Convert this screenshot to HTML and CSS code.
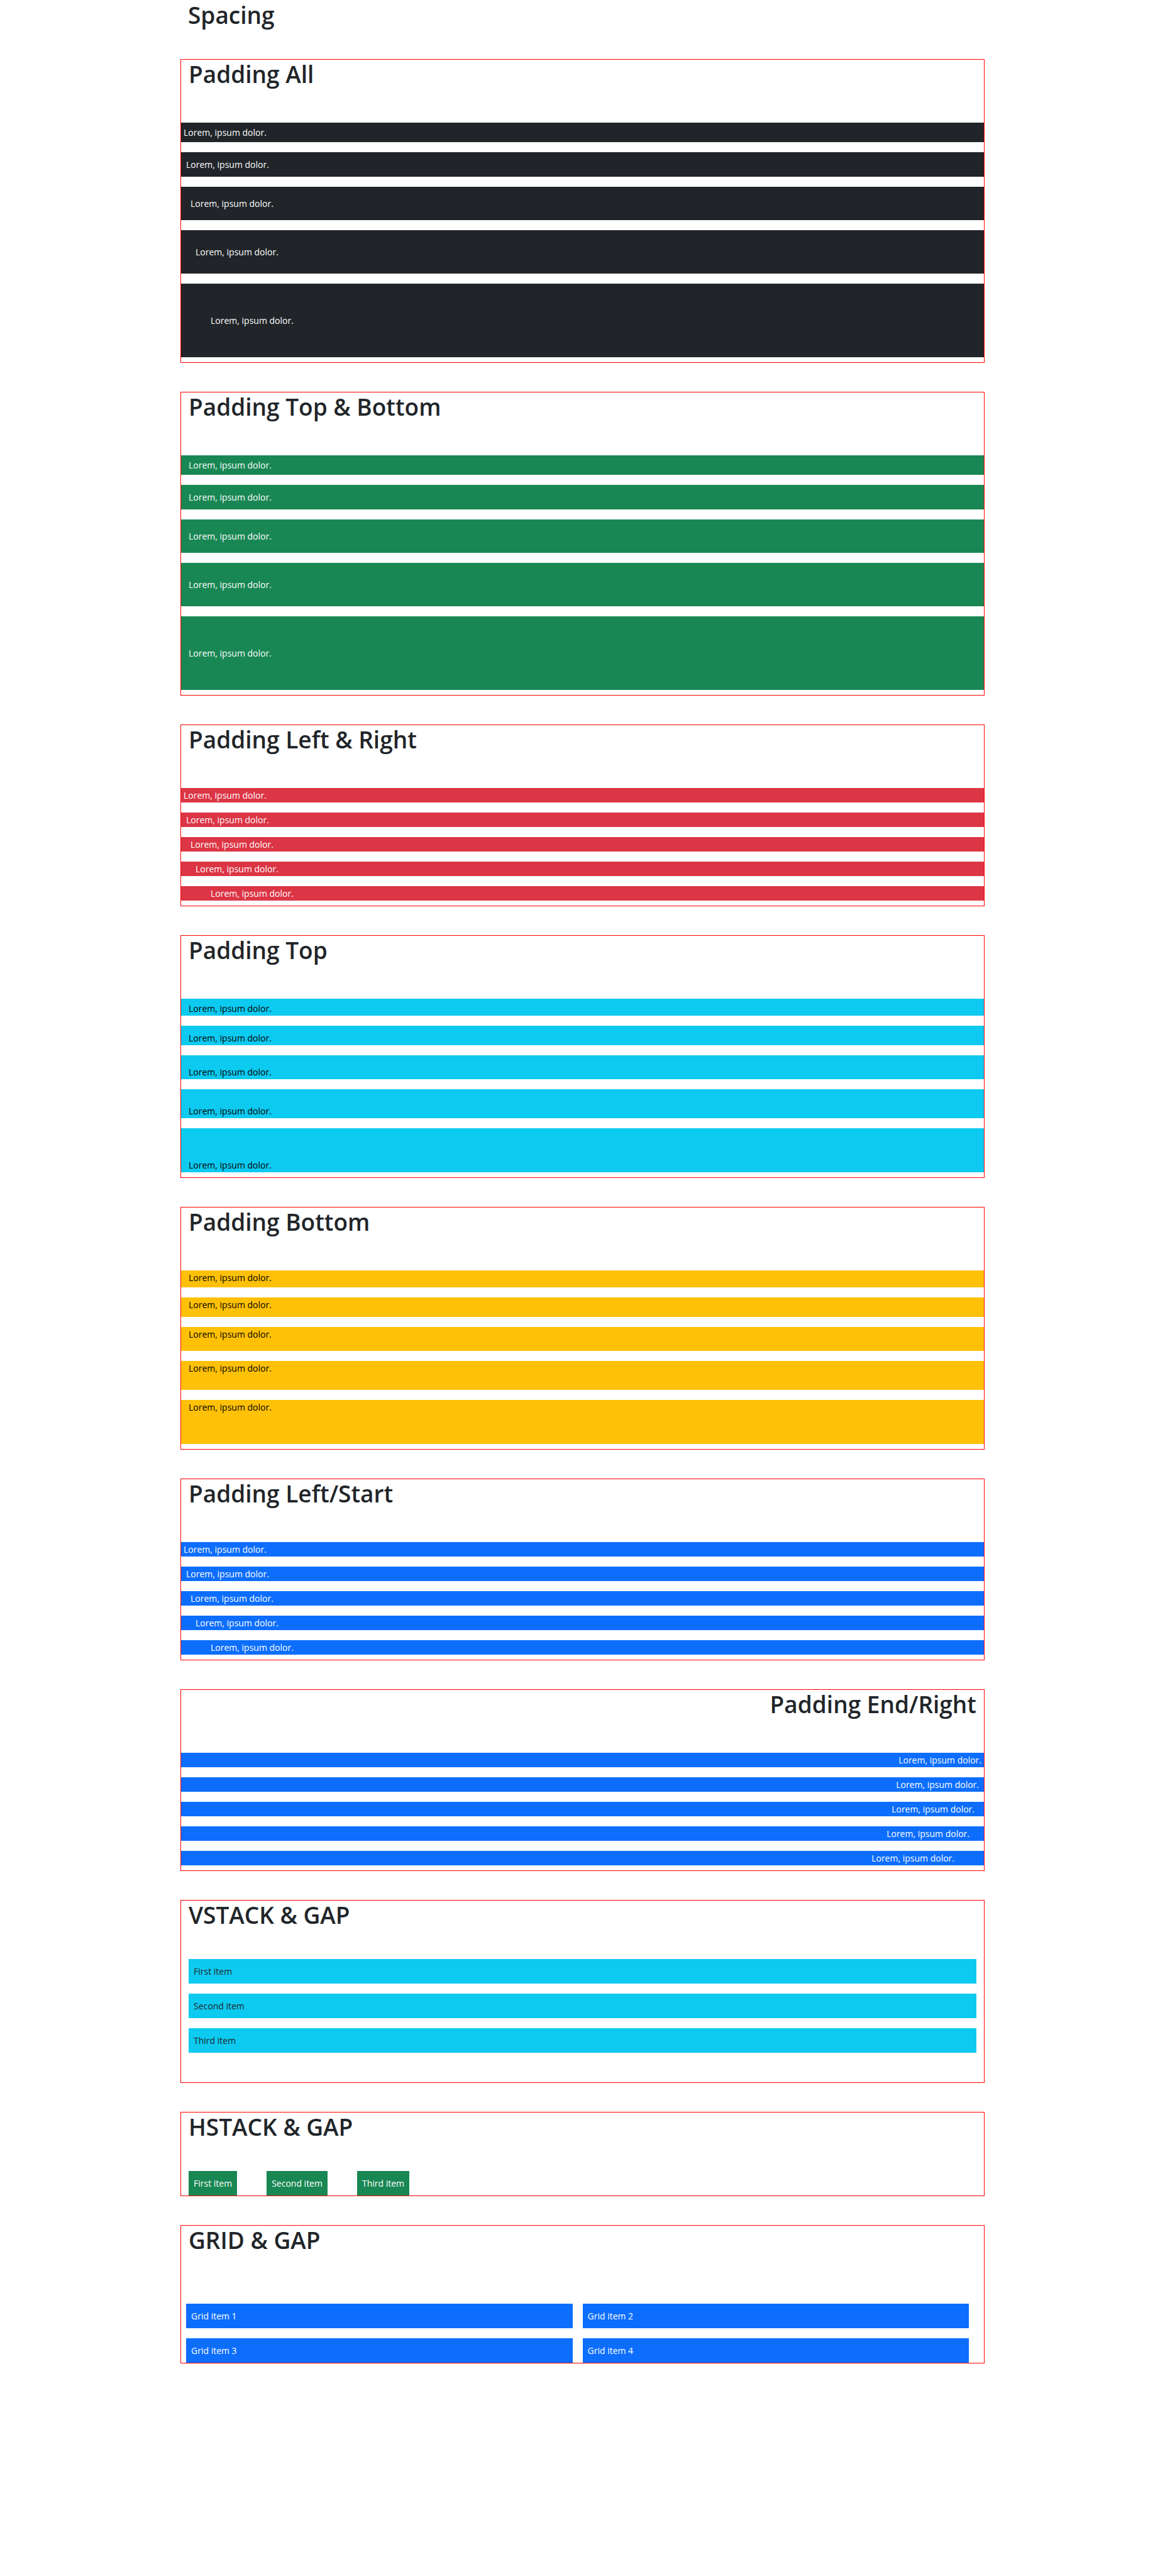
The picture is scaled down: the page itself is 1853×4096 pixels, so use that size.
FILE: index.html
```html
<!DOCTYPE html>
<html lang="en">
<head>
<meta charset="utf-8">
<meta name="viewport" content="width=device-width, initial-scale=1">
<title>Spacing</title>
<link rel="stylesheet" href="styles.css">
</head>
<body>
<main class="container">
  <h1 class="title page-title">Spacing</h1>

  <section class="box">
    <h1 class="title">Padding All</h1>
    <div class="bars dark">
      <div class="bar p-1">Lorem, ipsum dolor.</div>
      <div class="bar p-2">Lorem, ipsum dolor.</div>
      <div class="bar p-3">Lorem, ipsum dolor.</div>
      <div class="bar p-4">Lorem, ipsum dolor.</div>
      <div class="bar p-5">Lorem, ipsum dolor.</div>
    </div>
  </section>

  <section class="box">
    <h1 class="title">Padding Top &amp; Bottom</h1>
    <div class="bars success">
      <div class="bar py-1">Lorem, ipsum dolor.</div>
      <div class="bar py-2">Lorem, ipsum dolor.</div>
      <div class="bar py-3">Lorem, ipsum dolor.</div>
      <div class="bar py-4">Lorem, ipsum dolor.</div>
      <div class="bar py-5">Lorem, ipsum dolor.</div>
    </div>
  </section>

  <section class="box">
    <h1 class="title">Padding Left &amp; Right</h1>
    <div class="bars danger">
      <div class="bar px-1">Lorem, ipsum dolor.</div>
      <div class="bar px-2">Lorem, ipsum dolor.</div>
      <div class="bar px-3">Lorem, ipsum dolor.</div>
      <div class="bar px-4">Lorem, ipsum dolor.</div>
      <div class="bar px-5">Lorem, ipsum dolor.</div>
    </div>
  </section>

  <section class="box">
    <h1 class="title">Padding Top</h1>
    <div class="bars info">
      <div class="bar pt-1">Lorem, ipsum dolor.</div>
      <div class="bar pt-2">Lorem, ipsum dolor.</div>
      <div class="bar pt-3">Lorem, ipsum dolor.</div>
      <div class="bar pt-4">Lorem, ipsum dolor.</div>
      <div class="bar pt-5">Lorem, ipsum dolor.</div>
    </div>
  </section>

  <section class="box">
    <h1 class="title">Padding Bottom</h1>
    <div class="bars warning">
      <div class="bar pb-1">Lorem, ipsum dolor.</div>
      <div class="bar pb-2">Lorem, ipsum dolor.</div>
      <div class="bar pb-3">Lorem, ipsum dolor.</div>
      <div class="bar pb-4">Lorem, ipsum dolor.</div>
      <div class="bar pb-5">Lorem, ipsum dolor.</div>
    </div>
  </section>

  <section class="box">
    <h1 class="title">Padding Left/Start</h1>
    <div class="bars primary">
      <div class="bar ps-1">Lorem, ipsum dolor.</div>
      <div class="bar ps-2">Lorem, ipsum dolor.</div>
      <div class="bar ps-3">Lorem, ipsum dolor.</div>
      <div class="bar ps-4">Lorem, ipsum dolor.</div>
      <div class="bar ps-5">Lorem, ipsum dolor.</div>
    </div>
  </section>

  <section class="box text-end">
    <h1 class="title">Padding End/Right</h1>
    <div class="bars primary">
      <div class="bar pe-1">Lorem, ipsum dolor.</div>
      <div class="bar pe-2">Lorem, ipsum dolor.</div>
      <div class="bar pe-3">Lorem, ipsum dolor.</div>
      <div class="bar pe-4">Lorem, ipsum dolor.</div>
      <div class="bar pe-5">Lorem, ipsum dolor.</div>
    </div>
  </section>

  <section class="box">
    <h1 class="title">VSTACK &amp; GAP</h1>
    <div class="vstack">
      <div class="item">First item</div>
      <div class="item">Second item</div>
      <div class="item">Third item</div>
    </div>
  </section>

  <section class="box">
    <h1 class="title">HSTACK &amp; GAP</h1>
    <div class="hstack">
      <div class="item">First item</div>
      <div class="item">Second item</div>
      <div class="item">Third item</div>
    </div>
  </section>

  <section class="box">
    <h1 class="title">GRID &amp; GAP</h1>
    <div class="grid">
      <div class="item">Grid item 1</div>
      <div class="item">Grid item 2</div>
      <div class="item">Grid item 3</div>
      <div class="item">Grid item 4</div>
    </div>
  </section>
</main>
</body>
</html>
```
FILE: styles.css
```css
:root {
  --s1: 4px;
  --s2: 8px;
  --s3: 15px;
  --s4: 23px;
  --s5: 47px;
  --gutter: 12px;
}

* {
  box-sizing: border-box;
}

body {
  margin: 0;
  background: #fff;
  color: #212529;
  font-family: "Segoe UI", "Open Sans", "Noto Sans", sans-serif;
  font-size: 14px;
  line-height: 23px;
}

.container {
  max-width: 1279px;
  margin: 0 auto;
}

.title {
  margin: 0;
  padding: 0 var(--gutter);
  font-size: 37px;
  font-weight: 600;
  line-height: 46px;
}

.page-title {
  padding-top: 1px;
  margin-bottom: 47px;
}

.box {
  margin-bottom: 46px;
  border: 1px solid red;
}

.text-end {
  text-align: right;
}

/* Full-width bars */
.bars {
  display: flex;
  flex-direction: column;
  gap: 16px;
  margin: 54px 0 8px;
}

.bar {
  padding: 0 var(--gutter);
}

.dark .bar { background: #212529; color: #fff; }
.success .bar { background: #198754; color: #fff; }
.danger .bar { background: #dc3545; color: #fff; }
.info .bar { background: #0dcaf0; color: #000; }
.warning .bar { background: #ffc107; color: #000; }
.primary .bar { background: #0d6efd; color: #fff; }

.p-1 { padding: var(--s1); }
.p-2 { padding: var(--s2); }
.p-3 { padding: var(--s3); }
.p-4 { padding: var(--s4); }
.p-5 { padding: var(--s5); }

.py-1 { padding-block: var(--s1); }
.py-2 { padding-block: var(--s2); }
.py-3 { padding-block: var(--s3); }
.py-4 { padding-block: var(--s4); }
.py-5 { padding-block: var(--s5); }

.px-1 { padding-inline: var(--s1); }
.px-2 { padding-inline: var(--s2); }
.px-3 { padding-inline: var(--s3); }
.px-4 { padding-inline: var(--s4); }
.px-5 { padding-inline: var(--s5); }

.pt-1 { padding-top: var(--s1); }
.pt-2 { padding-top: var(--s2); }
.pt-3 { padding-top: var(--s3); }
.pt-4 { padding-top: var(--s4); }
.pt-5 { padding-top: var(--s5); }

.pb-1 { padding-bottom: var(--s1); }
.pb-2 { padding-bottom: var(--s2); }
.pb-3 { padding-bottom: var(--s3); }
.pb-4 { padding-bottom: var(--s4); }
.pb-5 { padding-bottom: var(--s5); }

.ps-1 { padding-left: var(--s1); }
.ps-2 { padding-left: var(--s2); }
.ps-3 { padding-left: var(--s3); }
.ps-4 { padding-left: var(--s4); }
.ps-5 { padding-left: var(--s5); }

.pe-1 { padding-right: var(--s1); }
.pe-2 { padding-right: var(--s2); }
.pe-3 { padding-right: var(--s3); }
.pe-4 { padding-right: var(--s4); }
.pe-5 { padding-right: var(--s5); }

/* Stacks and grid */
.item {
  padding: 8px;
}

.vstack {
  display: flex;
  flex-direction: column;
  gap: 16px;
  margin: 47px var(--gutter);
}

.vstack .item {
  background: #0dcaf0;
}

.hstack {
  display: flex;
  gap: 47px;
  margin: 47px var(--gutter) 0;
}

.hstack .item {
  background: #198754;
  color: #fff;
}

.grid {
  display: grid;
  grid-template-columns: 1fr 1fr;
  gap: 16px;
  margin: 78px 24px 0 8px;
}

.grid .item {
  background: #0d6efd;
  color: #fff;
}
```
